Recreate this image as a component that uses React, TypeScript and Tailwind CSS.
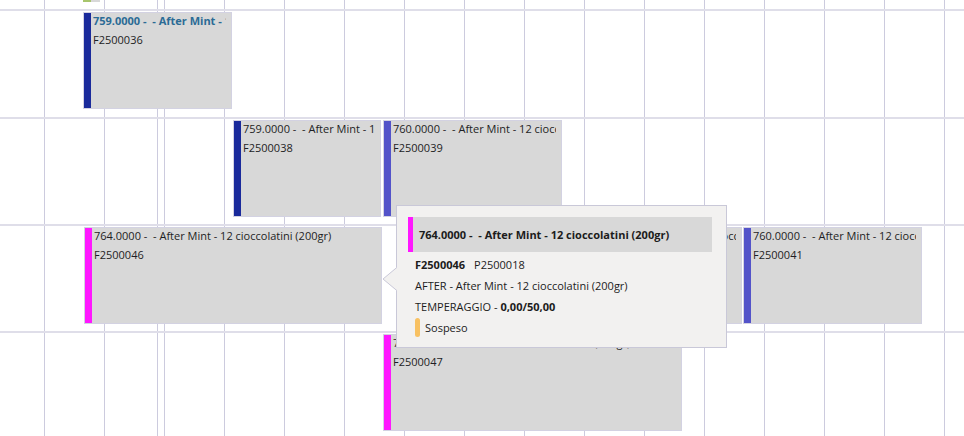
import React from "react";

type Card = {
  left: number;
  width: number;
  bar: string;
  title: string;
  sub: string;
  selected?: boolean;
};

const TITLE_759 = "759.0000 -  - After Mint - 12 cioccolatini (200gr)";
const TITLE_760 = "760.0000 -  - After Mint - 12 cioccolatini (200gr)";
const TITLE_764 = "764.0000 -  - After Mint - 12 cioccolatini (200gr)";

const DARK = "bg-[#1a2a9b]";
const MID = "bg-[#5353c9]";
const MAG = "bg-[#ff17ff]";

const rows: { h: string; cards: Card[] }[] = [
  {
    h: "h-[108px]",
    cards: [{ left: 83, width: 149, bar: DARK, title: TITLE_759, sub: "F2500036", selected: true }],
  },
  {
    h: "h-[107px]",
    cards: [
      { left: 233, width: 148, bar: DARK, title: TITLE_759, sub: "F2500038" },
      { left: 383, width: 179, bar: MID, title: TITLE_760, sub: "F2500039" },
    ],
  },
  {
    h: "h-[107px]",
    cards: [
      { left: 84, width: 298, bar: MAG, title: TITLE_764, sub: "F2500046" },
      { left: 562, width: 180, bar: MID, title: TITLE_760, sub: "F2500040" },
      { left: 743, width: 179, bar: MID, title: TITLE_760, sub: "F2500041" },
    ],
  },
  {
    h: "h-[120px]",
    cards: [{ left: 383, width: 299, bar: MAG, title: TITLE_764, sub: "F2500047" }],
  },
];

function CardView({ c }: { c: Card }) {
  return (
    <div
      className="absolute top-[1px] h-[97px] flex border border-[#d3d2e2] bg-[#d8d8d8]"
      style={{ left: c.left, width: c.width }}
    >
      <div className={`w-[7px] shrink-0 ${c.bar}`} />
      <div className="flex-1 min-w-0 overflow-hidden ml-[2px] mr-[5px] whitespace-pre">
        <div
          className={
            "leading-[16px] " +
            (c.selected ? "font-bold text-[#2b6b95]" : "text-[#1e1e24]")
          }
        >
          {c.title}
        </div>
        <div className="mt-[1px] leading-[19px] text-[#1e1e24]">{c.sub}</div>
      </div>
    </div>
  );
}

export default function App() {
  const cols = Array.from({ length: 16 });
  return (
    <div
      className="relative w-[964px] h-[436px] overflow-hidden bg-white text-[11px]"
      style={{ fontFamily: "'Open Sans', 'Noto Sans', sans-serif" }}
    >
      {/* grid columns background */}
      <div className="absolute inset-0 flex">
        <div className="w-[44px] shrink-0" />
        {cols.map((_, i) => (
          <div key={i} className="w-[60px] shrink-0 border-l border-[#cccbde]" />
        ))}
      </div>
      <div className="absolute top-0 bottom-0 left-[157px] w-px bg-[#cccbde]" />

      {/* rows */}
      <div className="relative flex flex-col">
        <div className="relative h-[9px]">
          <div className="absolute left-[83px] top-0 h-[2px] w-[17px] flex">
            <div className="w-[8px] bg-[#a7c56c]" />
            <div className="flex-1 bg-[#d8d8d8]" />
          </div>
        </div>
        {rows.map((r, i) => (
          <div key={i} className={`relative ${r.h} border-t-2 border-[#dfdee9]`}>
            {r.cards.map((c, j) => (
              <CardView key={j} c={c} />
            ))}
          </div>
        ))}
      </div>

      {/* tooltip */}
      <div className="absolute left-[396px] top-[205px] w-[331px] h-[143px] border border-[#c9c8d8] bg-[#f2f1f0] pt-[11px] pl-[11px] pr-[14px] text-[#1c1c1c]">
        <svg
          className="absolute left-[-15px] top-[60px]"
          width="17"
          height="26"
          viewBox="0 0 17 26"
        >
          <polygon points="16,0 1,13 16,26" fill="#f2f1f0" />
          <polyline points="16,0.5 1,13 16,25.5" fill="none" stroke="#c9c8d8" strokeWidth="1" />
          <rect x="15" y="0" width="2" height="26" fill="#f2f1f0" />
        </svg>
        <div className="flex h-[35px] bg-[#d8d8d8]">
          <div className={`w-[5px] shrink-0 ${MAG}`} />
          <div className="pl-[6px] font-bold leading-[35px] whitespace-pre">{TITLE_764}</div>
        </div>
        <div className="pl-[7px] mt-[2px] leading-[21px]">
          <div className="flex">
            <span className="font-bold">F2500046</span>
            <span className="ml-[9px]">P2500018</span>
          </div>
          <div>AFTER - After Mint - 12 cioccolatini (200gr)</div>
          <div>
            TEMPERAGGIO - <span className="font-bold">0,00/50,00</span>
          </div>
          <div className="flex items-center h-[21px]">
            <div className="w-[5px] h-[19px] rounded-full bg-[#f8c162]" />
            <span className="ml-[5px]">Sospeso</span>
          </div>
        </div>
      </div>
    </div>
  );
}
